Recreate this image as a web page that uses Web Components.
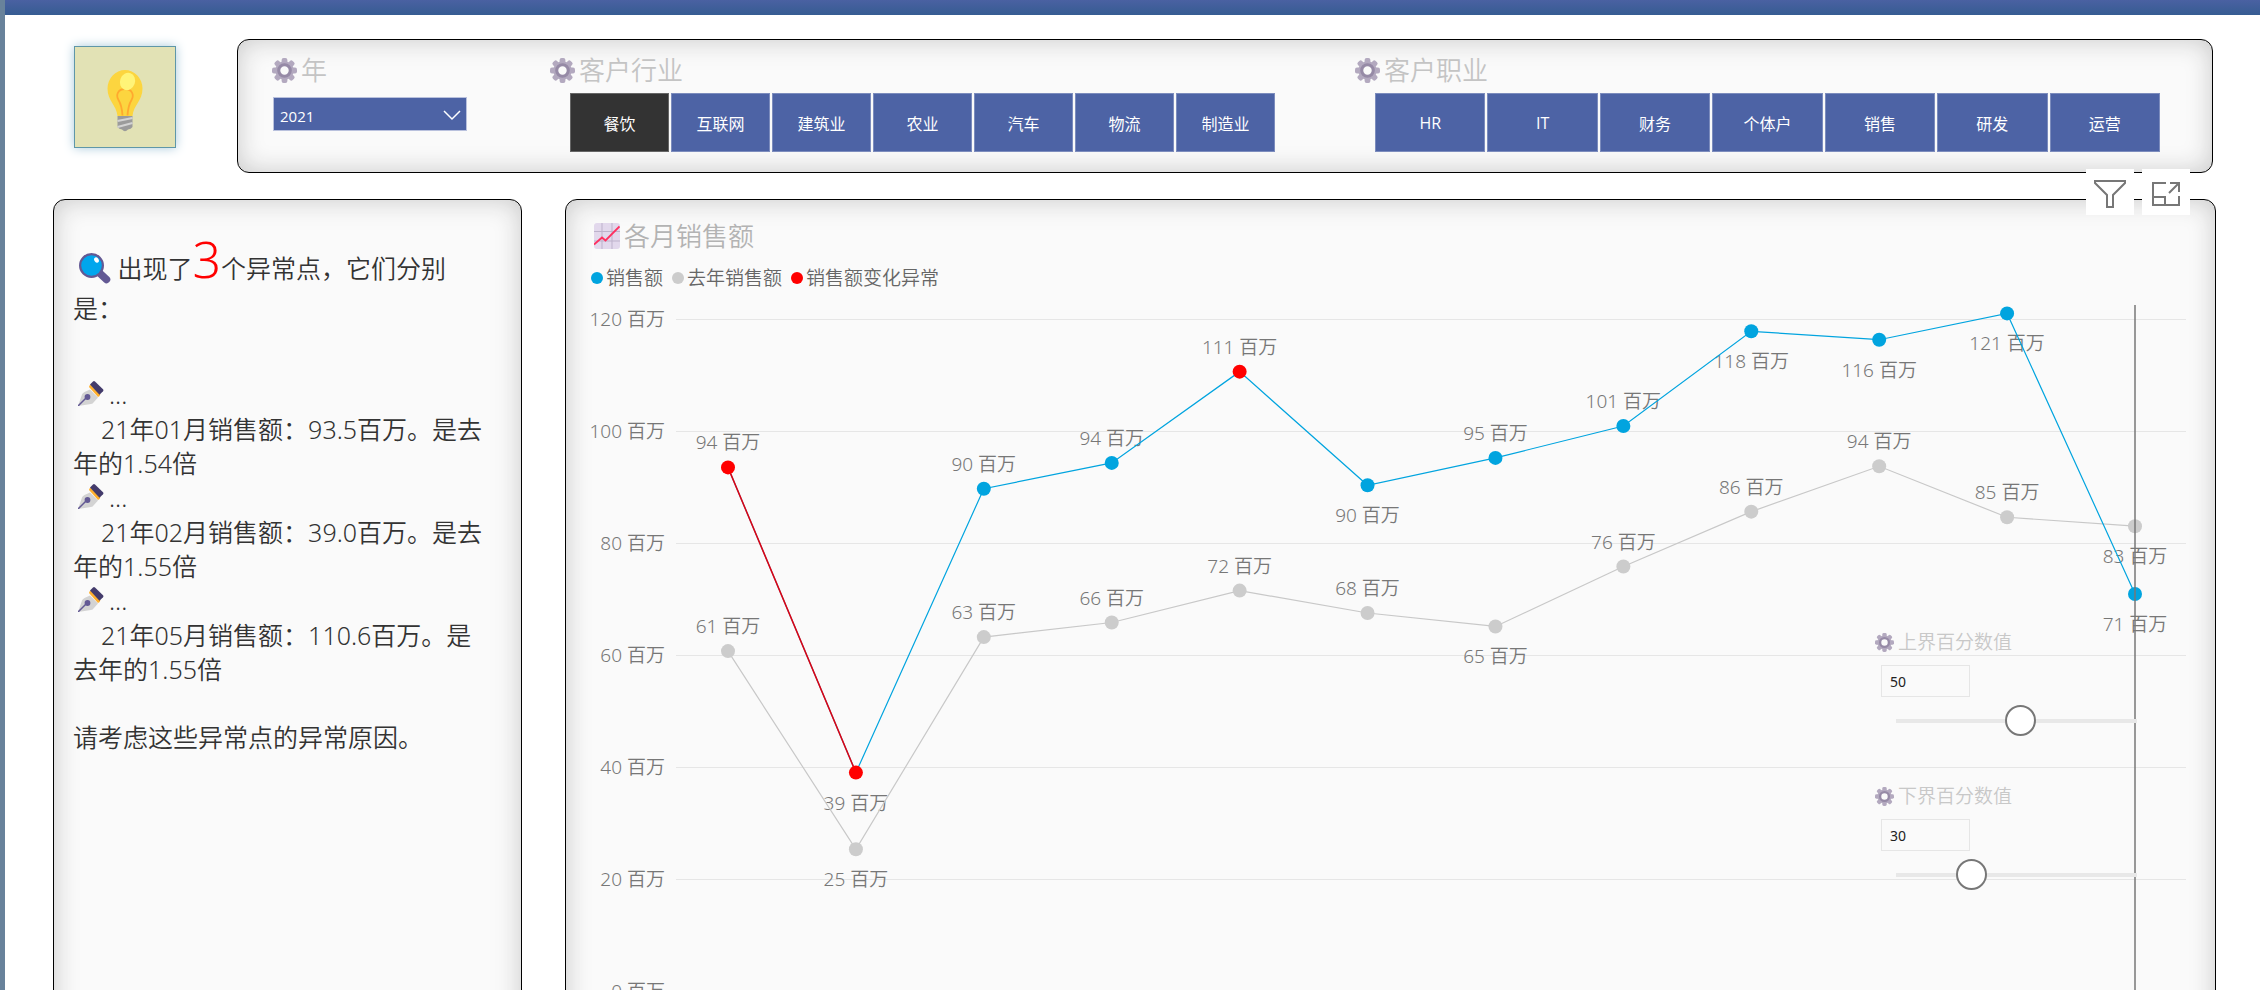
<!DOCTYPE html>
<html lang="zh-CN">
<head>
<meta charset="utf-8">
<title>各月销售额</title>
<style>
  html, body { margin: 0; height: 100%; }
  body {
    overflow: hidden;
    background: #fff;
    color: #333;
    font-family: "Noto Sans", "Noto Sans CJK SC", sans-serif;
    font-weight: 350;
  }
</style>
</head>
<body>
<sales-dashboard></sales-dashboard>

<script>
const define = (name, markup, setup) => {
  const template = document.createElement('template');
  template.innerHTML = markup;
  customElements.define(name, class extends HTMLElement {
    connectedCallback() {
      if (this.shadowRoot) return;
      this.attachShadow({ mode: 'open' }).append(template.content.cloneNode(true));
      if (setup) setup(this, this.shadowRoot);
    }
  });
};

/* ---------- icons ---------- */
define('gear-icon', `
  <style>
    :host { display: block; flex: none; width: 25px; height: 25px; }
    svg { display: block; width: 100%; height: 100%; }
  </style>
  <svg viewBox="0 0 26 26" aria-hidden="true">
    <g fill="#b3a9bf">
      <g id="teeth"></g>
      <circle cx="13" cy="13" r="9.6"/>
    </g>
    <circle cx="13" cy="13" r="6" fill="#fafafa" stroke="#968aa6" stroke-width="3.2"/>
  </svg>`, (host, root) => {
  const teeth = root.getElementById('teeth');
  for (let a = 0; a < 360; a += 45) {
    const r = document.createElementNS('http://www.w3.org/2000/svg', 'rect');
    for (const [k, v] of Object.entries({ x: 10, y: 0, width: 6, height: 8, rx: 2, transform: `rotate(${a} 13 13)` })) r.setAttribute(k, v);
    teeth.append(r);
  }
});

define('trend-icon', `
  <style>:host { display: block; flex: none; width: 26px; height: 26px; } svg { display: block; }</style>
  <svg width="26" height="26" viewBox="0 0 26 26" aria-hidden="true">
    <rect width="26" height="26" rx="3" fill="#e2d8ec"/>
    <path d="M8 0v26M18 0v26M0 8.500h26M0 18h26" stroke="#bdb2cb" fill="none"/>
    <path d="M0 21.500l8-7 3.500 3L25.500 3.500" stroke="#ff2f60" stroke-width="1.800" fill="none"/>
  </svg>`);

define('lens-icon', `
  <style>:host { display: inline-block; width: 32px; height: 31px; } svg { display: block; }</style>
  <svg width="32" height="31" viewBox="0 0 32 31" aria-hidden="true">
    <path d="M20.500 20l7 6.500" stroke="#635994" stroke-width="7.500" stroke-linecap="round"/>
    <circle cx="12.500" cy="12.500" r="11.400" fill="#00a6ed" stroke="#635994" stroke-width="2.200"/>
    <ellipse cx="17.500" cy="7" rx="2.200" ry="2.800" fill="#fff" transform="rotate(-30 17.500 7)"/>
  </svg>`);

define('pen-icon', `
  <style>:host { display: inline-block; width: 26px; height: 25px; } svg { display: block; }</style>
  <svg width="26" height="25" viewBox="0 0 26 25" aria-hidden="true">
    <path d="M0 25L4 13.500Q4.500 12 6.500 11L12 8.500l8 8-4.500 5Q15 22.500 13 23z" fill="#d3d3d3"/>
    <path d="M0 25l9-9" stroke="#635994" stroke-width="1.500"/>
    <circle cx="9.500" cy="16" r="2.900" fill="#635994"/>
    <path d="M11 6q0-2 1.800-2.200l9.500 9.500q-.200 2.200-2.300 2.700z" fill="#ffb02e"/>
    <path d="M12 3.500l3-3q1-.9 2 0l8 7.800q.9 1 0 2l-3.500 3.400z" fill="#433b6b"/>
  </svg>`);

define('bulb-logo', `
  <style>
    :host {
      box-sizing: border-box; display: grid; place-items: center; flex: none;
      width: 102px; height: 102px; background: #e2e2b5; border: 1px solid #5f97a8;
      box-shadow: 0 0 10px #a9cadb;
    }
    svg { margin-top: 8px; }
  </style>
  <svg width="36" height="62" viewBox="0 0 36 62" aria-hidden="true">
    <path d="M18 0A17.500 18.500 0 0 0 .5 18.500C.5 31 9.500 35 10.500 46h15C26.500 35 35.500 31 35.500 18.500A17.500 18.500 0 0 0 18 0z" fill="#fcd53f"/>
    <path d="M15.500 45.500C15 38 14 34 11.500 30c-3-5-.5-11 6.500-11s9.500 6 6.500 11c-2.500 4-3.500 8-4 15.500" fill="none" stroke="#ffa92e" stroke-width="1.800"/>
    <ellipse cx="20.500" cy="11.500" rx="7.500" ry="8.800" fill="#fff478" transform="rotate(20 20.500 11.500)"/>
    <path d="M10.500 46h15v11q-1.500 2-4.500 2.500-3 3.500-6 0-3-.5-4.500-2.500z" fill="#9b9b9b"/>
    <path d="M10.500 51l15-3M10.500 57l15-4" stroke="#d3d3d3" stroke-width="2"/>
  </svg>`);

/* ---------- panels and titles ---------- */
define('soft-panel', `
  <style>
    :host {
      display: block; box-sizing: border-box; background: #fafafa;
      border: 1px solid #000; border-radius: 12px;
      box-shadow: inset 0 0 26px #c8c8c8;
    }
  </style>
  <slot></slot>`);

define('visual-title', `
  <style>
    :host { display: flex; align-items: center; gap: 4px; height: 32px; color: #c4c4c4; font-size: 26px; line-height: 32px; white-space: nowrap; }
    h2 { margin: 0; font: inherit; }
  </style>
  <slot name="icon"><gear-icon></gear-icon></slot>
  <h2><slot></slot></h2>`);

/* ---------- filters ---------- */
define('year-filter', `
  <style>
    :host { display: block; }
    .box { position: relative; width: 194px; margin: 11px 0 0 1px; }
    select {
      appearance: none; box-sizing: border-box; width: 100%; height: 34px; padding: 4px 6px 0;
      border: 1px solid #b9c1dd; border-radius: 0; background: #4d63a5; color: #fff;
      font: 400 15px "Open Sans", sans-serif;
    }
    svg { position: absolute; right: 6px; top: 13px; pointer-events: none; }
  </style>
  <visual-title>年</visual-title>
  <div class="box">
    <select aria-label="年"><option>2021</option></select>
    <svg width="18" height="11" viewBox="0 0 18 11" aria-hidden="true"><path d="M1 1l8 8 8-8" fill="none" stroke="#fff" stroke-width="1.500"/></svg>
  </div>`);

define('tile-filter', `
  <style>
    :host { display: block; }
    .tiles { display: flex; gap: 2px; margin: 7px 0 0 20px; }
    button {
      flex: 1 1 0; min-width: 0; height: 59px; padding: 0; border: 1px solid #7c8cbd; border-radius: 0;
      background: #4d63a5; color: #fff; font: 400 16px "Open Sans", "Noto Sans CJK SC", sans-serif;
    }
    button[aria-pressed="true"] { background: #333; border-color: #666; }
  </style>
  <visual-title></visual-title>
  <div class="tiles" role="group"></div>`, (host, root) => {
  root.querySelector('visual-title').textContent = host.getAttribute('label');
  const tiles = root.querySelector('.tiles');
  tiles.setAttribute('aria-label', host.getAttribute('label'));
  for (const name of host.getAttribute('options').split(',')) {
    const b = document.createElement('button');
    b.type = 'button';
    b.textContent = name;
    b.setAttribute('aria-pressed', name === host.getAttribute('selected'));
    tiles.append(b);
  }
});

/* ---------- narrative ---------- */
define('anomaly-note', `
  <style>
    :host { display: block; padding: 39px 26px 0 19px; font-size: 25px; line-height: 34px; color: #333; }
    p { margin: 0; }
    .lead { line-height: 40px; }
    .lead lens-icon { margin: 0 0 0 6px; vertical-align: -6px; }
    .count { color: #f00; font-size: 50px; line-height: 40px; }
    ol { list-style: none; margin: 49px 0 34px; padding: 0; }
    .mark { line-height: 35px; }
    pen-icon { margin: 0 5px; vertical-align: -2px; }
    .month { text-indent: 28px; }
  </style>
  <p class="lead"><lens-icon></lens-icon> 出现了<span class="count">3</span>个异常点，它们分别是：</p>
  <ol>
    <li><p class="mark"><pen-icon></pen-icon>...</p><p class="month">21年01月销售额：93.5百万。是去年的1.54倍</p></li>
    <li><p class="mark"><pen-icon></pen-icon>...</p><p class="month">21年02月销售额：39.0百万。是去年的1.55倍</p></li>
    <li><p class="mark"><pen-icon></pen-icon>...</p><p class="month">21年05月销售额：110.6百万。是去年的1.55倍</p></li>
  </ol>
  <p>请考虑这些异常点的异常原因。</p>`);

/* ---------- chart ---------- */
const CURRENT = [93.5, 39, 89.7, 94.3, 110.6, 90.3, 95.2, 100.9, 117.8, 116.3, 121, 70.9];
const PRIOR = [60.7, 25.3, 63.2, 65.8, 71.5, 67.5, 65.1, 75.8, 85.6, 93.7, 84.6, 83];
const ANOMALY = [0, 1, 4];
const CURRENT_BELOW = [1, 5, 8, 9, 10, 11];
const PRIOR_BELOW = [1, 6, 11];

define('line-chart', `
  <style>
    :host { display: block; height: 760px; }
    svg { display: block; width: 100%; height: 100%; overflow: visible; }
    text { font-size: 19px; fill: #777; }
    .grid { stroke: #e6e6e6; stroke-width: 1; shape-rendering: crispEdges; }
    .line { fill: none; stroke-width: 1.2; }
    .axis { text-anchor: end; }
    .value { text-anchor: middle; }
  </style>
  <svg role="img" aria-label="各月销售额"></svg>`, (host, root) => {
  const svg = root.querySelector('svg');
  const top = 23, step = 112, plotLeft = 82;
  const draw = () => {
    const width = host.clientWidth;
    const first = plotLeft + 52, last = width - 51;
    const x = i => first + (last - first) * i / 11;
    const y = v => top + (120 - v) * step / 20;
    const points = (data, idx) => idx.map(i => `${x(i)},${y(data[i])}`).join(' ');
    const all = CURRENT.map((_, i) => i);
    let out = '';
    for (let v = 0; v <= 120; v += 20) {
      out += `<line class="grid" x1="${plotLeft}" x2="${width}" y1="${y(v) + .5}" y2="${y(v) + .5}"/>`;
      out += `<text class="axis" x="71" y="${y(v) + 7}">${v} 百万</text>`;
    }
    const labels = (data, below) => data.map((v, i) =>
      `<text class="value" x="${x(i)}" y="${y(v) + (below.includes(i) ? 37 : -18)}">${Math.round(v)} 百万</text>`).join('');
    out += labels(PRIOR, PRIOR_BELOW) + labels(CURRENT, CURRENT_BELOW);
    out += `<polyline class="line" stroke="#c8c8c8" points="${points(PRIOR, all)}"/>`;
    out += `<polyline class="line" stroke="#01a4df" points="${points(CURRENT, all)}"/>`;
    out += `<polyline class="line" stroke="#e00010" style="stroke-width:1.5" points="${points(CURRENT, [0, 1])}"/>`;
    const dots = (data, colour) => data.map((v, i) =>
      `<circle cx="${x(i)}" cy="${y(v)}" r="7" fill="${ANOMALY.includes(i) && data === CURRENT ? '#f00' : colour}"/>`).join('');
    out += dots(PRIOR, '#ccc') + dots(CURRENT, '#01a4df');
    out += `<line x1="${last}" x2="${last}" y1="9" y2="760" stroke="#777" stroke-width="1.500"/>`;
    svg.innerHTML = out;
  };
  draw();
  new ResizeObserver(draw).observe(host);
});

define('chart-legend', `
  <style>
    ul { display: flex; gap: 9px; list-style: none; margin: 0; padding: 0; font-size: 19px; line-height: 28px; color: #666; white-space: nowrap; }
    :host { display: block; }
    li { display: flex; align-items: center; gap: 3px; }
    i { width: 12px; height: 12px; border-radius: 50%; background: var(--dot); }
  </style>
  <ul>
    <li style="--dot:#01a4df"><i></i>销售额</li>
    <li style="--dot:#ccc"><i></i>去年销售额</li>
    <li style="--dot:#f00"><i></i>销售额变化异常</li>
  </ul>`);

define('bound-control', `
  <style>
    :host { display: block; height: 154px; }
    label { display: flex; align-items: center; gap: 4px; font-size: 19px; line-height: 28px; color: #c8c8c8; }
    gear-icon { width: 19px; height: 19px; }
    input { display: block; box-sizing: border-box; margin: 0; }
    .number {
      width: 89px; height: 32px; margin: 9px 0 0 6px; padding: 0 8px; border: 1px solid #e6e6e6;
      background: #fafafa; color: #222; font: 400 14px "Noto Sans", sans-serif;
    }
    .range {
      appearance: none; width: 272px; height: 31px; margin: 8px 0 0 9px;
      background: linear-gradient(#e8e8e8, #e8e8e8) 12px 50% / 241px 4px no-repeat;
    }
    .range::-webkit-slider-thumb {
      appearance: none; box-sizing: border-box; width: 31px; height: 31px;
      border: 2px solid #777; border-radius: 50%; background: #fff;
    }
  </style>
  <label for="n"><gear-icon></gear-icon><span></span></label>
  <input id="n" class="number" type="text" inputmode="numeric">
  <input class="range" type="range" min="0" max="100">`, (host, root) => {
  const label = host.getAttribute('label'), value = host.getAttribute('value');
  root.querySelector('span').textContent = label;
  const number = root.querySelector('.number'), range = root.querySelector('.range');
  number.value = range.value = value;
  range.setAttribute('aria-label', label);
  range.addEventListener('input', () => { number.value = range.value; });
  number.addEventListener('change', () => { range.value = number.value; });
});

define('visual-tools', `
  <style>
    :host { display: flex; gap: 8px; }
    button { display: grid; place-items: center; width: 48px; height: 46px; padding: 0; border: 0; background: #fff; }
    svg { margin-top: 4px; }
  </style>
  <button type="button" aria-label="筛选器">
    <svg width="32" height="28" viewBox="0 0 32 28" fill="none" stroke="#777" stroke-width="2" aria-hidden="true"><path d="M1 1h30v2L19 15v12h-6V15L1 3z"/></svg>
  </button>
  <button type="button" aria-label="焦点模式">
    <svg width="28" height="24" viewBox="0 0 28 24" fill="none" stroke="#777" stroke-width="2" aria-hidden="true"><path d="M14 1H1v22h26V14M1 15h12v8M18 1h9v9M27 1L17 11"/></svg>
  </button>`);

define('sales-chart', `
  <style>
    :host { display: block; position: relative; padding: 20px 29px 0 28px; }
    visual-title { color: #b3b3b3; }
    chart-legend { margin: 12px 0 4px -3px; }
    .bounds { position: absolute; top: 428px; right: 59px; width: 281px; }
    visual-tools { position: absolute; top: -31px; right: 25px; }
  </style>
  <visual-title><trend-icon slot="icon"></trend-icon>各月销售额</visual-title>
  <chart-legend></chart-legend>
  <line-chart></line-chart>
  <div class="bounds">
    <bound-control label="上界百分数值" value="50"></bound-control>
    <bound-control label="下界百分数值" value="30"></bound-control>
  </div>
  <visual-tools></visual-tools>`);

/* ---------- page ---------- */
define('sales-dashboard', `
  <style>
    :host {
      display: block; box-sizing: border-box; height: 100vh; overflow: hidden;
      border-left: 5px solid #68829b; background: #fff;
    }
    .bar { height: 15px; background: linear-gradient(#4a61a2, #365c92); }
    header { display: flex; align-items: flex-start; gap: 61px; padding: 24px 47px 0 69px; }
    bulb-logo { margin-top: 7px; }
    .filters { flex: 1; height: 134px; }
    .row { display: grid; grid-template-columns: 278px 725fr 80px 805fr; padding: 14px 52px 0 34px; }
    .row > :last-child { grid-column: 4; }
    main { display: grid; grid-template-columns: 469px minmax(0, 1fr); gap: 43px; padding: 26px 44px 0 48px; }
  </style>
  <div class="bar"></div>
  <header>
    <bulb-logo></bulb-logo>
    <soft-panel class="filters">
      <div class="row">
        <year-filter></year-filter>
        <tile-filter label="客户行业" options="餐饮,互联网,建筑业,农业,汽车,物流,制造业" selected="餐饮"></tile-filter>
        <tile-filter label="客户职业" options="HR,IT,财务,个体户,销售,研发,运营"></tile-filter>
      </div>
    </soft-panel>
  </header>
  <main>
    <soft-panel><anomaly-note></anomaly-note></soft-panel>
    <soft-panel><sales-chart></sales-chart></soft-panel>
  </main>`);
</script>
</body>
</html>
